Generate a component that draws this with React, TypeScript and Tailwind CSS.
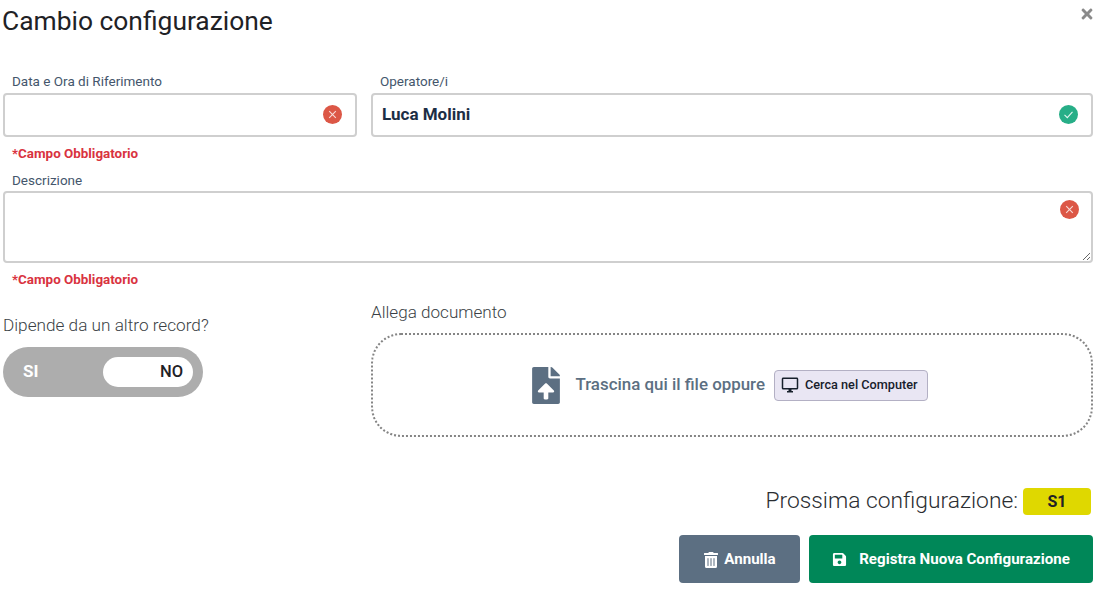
import { FaFileUpload, FaTrashAlt, FaSave, FaTimes } from "react-icons/fa";
import { MdOutlineDesktopWindows } from "react-icons/md";

function ErrIcon() {
  return (
    <svg width="19" height="19" viewBox="0 0 19 19" className="block">
      <circle cx="9.5" cy="9.5" r="9.5" fill="#dc5746" />
      <path d="M6.2 6.2l6.6 6.6M12.8 6.2l-6.6 6.6" stroke="#f8dcd8" strokeWidth="1.1" fill="none" />
    </svg>
  );
}

function OkIcon() {
  return (
    <svg width="19" height="19" viewBox="0 0 19 19" className="block">
      <circle cx="9.5" cy="9.5" r="9.5" fill="#27ae87" />
      <path d="M5.5 9.8l2.8 2.8 5.2-5.7" stroke="#e4f6f0" strokeWidth="1.1" fill="none" />
    </svg>
  );
}

function Label({ children }: { children: React.ReactNode }) {
  return <div className="h-[15px] pl-[9px] pt-[1px] text-[13.5px] leading-[15px] text-[#44566c]">{children}</div>;
}

function ErrorText() {
  return <div className="pl-[9px] text-[13.4px] leading-[15px] font-bold text-[#d9333f]">*Campo Obbligatorio</div>;
}

export default function App() {
  return (
    <div className="flex h-[591px] w-full flex-col overflow-hidden bg-white pl-[3px] pr-[10px] font-['Roboto',sans-serif]">
      <div className="flex h-[73px] items-start justify-between">
        <h1 className="ml-[-1px] pt-[3px] text-[26.4px] leading-[36px] font-normal text-[#1f2226]">Cambio configurazione</h1>
        <FaTimes className="mt-[6px] mr-[-2px] text-[16px] text-[#8a8a8a]" />
      </div>

      <div className="flex gap-[14px]">
        <div className="flex w-[354px] flex-col">
          <Label>Data e Ora di Riferimento</Label>
          <div className="mt-[5px] flex h-[44px] items-center justify-end rounded-[4px] border-2 border-[#cfcfcf] pr-[13px]">
            <div className="mb-[2px]"><ErrIcon /></div>
          </div>
          <div className="mt-[9px]"><ErrorText /></div>
        </div>
        <div className="flex min-w-0 flex-1 flex-col">
          <Label>Operatore/i</Label>
          <div className="mt-[5px] flex h-[44px] items-center justify-between rounded-[4px] border-2 border-[#cfcfcf] pl-[9px] pr-[13px]">
            <span className="text-[17px] font-bold text-[#1c2e45]">Luca Molini</span>
            <div className="mb-[2px]"><OkIcon /></div>
          </div>
        </div>
      </div>

      <div className="mt-[11px]"><Label>Descrizione</Label></div>
      <div className="relative mt-[4px] h-[72px]">
        <textarea className="block h-full w-full rounded-[4px] border-2 border-[#cfcfcf] outline-none" />
        <div className="absolute top-[9px] right-[14px]"><ErrIcon /></div>
      </div>
      <div className="mt-[9px]"><ErrorText /></div>

      <div className="mt-[14px] flex gap-[168px]">
        <div className="w-[200px] pt-[13px]">
          <div className="whitespace-nowrap text-[17.2px] leading-[22px] font-light text-[#3a3f45]">Dipende da un altro record?</div>
          <div className="mt-[11px] flex h-[50px] w-[200px] items-center justify-between rounded-full bg-[#adadad] pl-[20px] pr-[10px]">
            <span className="text-[17px] font-bold text-white">SI</span>
            <div className="flex h-[30px] w-[90px] items-center justify-end rounded-full bg-white pr-[10px]">
              <span className="text-[16.5px] font-medium text-[#1f2226]">NO</span>
            </div>
          </div>
        </div>
        <div className="min-w-0 flex-1">
          <div className="text-[17.1px] leading-[22px] font-light text-[#3a3f45]">Allega documento</div>
          <div className="mt-[10px] flex h-[104px] items-center justify-center gap-[15px] rounded-[30px] border-2 border-dotted border-[#858585] pr-[4px]">
            <FaFileUpload className="h-[37px] w-[28px] text-[#5c6f82]" />
            <div className="flex items-center gap-[9px]">
              <span className="text-[16.9px] font-medium text-[#5c6f82]">Trascina qui il file oppure</span>
              <div className="flex h-[31px] items-center gap-[6px] rounded-[4px] border border-[#b3b0c4] bg-[#e9e6f3] pl-[6px] pr-[9px]">
                <MdOutlineDesktopWindows className="text-[18px] text-[#17202b]" />
                <span className="text-[12.7px] font-medium text-[#17202b]">Cerca nel Computer</span>
              </div>
            </div>
          </div>
        </div>
      </div>

      <div className="mt-[51px] flex h-[27px] items-center justify-end gap-[5px] pr-[2px]">
        <span className="text-[22.8px] font-light text-[#2a2d31]">Prossima configurazione:</span>
        <div className="flex h-[27px] w-[68px] items-center justify-center rounded-[4px] bg-[#dfd800] text-[16px] font-bold text-[#1f2226]">S1</div>
      </div>

      <div className="mt-[20px] flex justify-end gap-[9px]">
        <button className="flex h-[48px] w-[121px] items-center justify-center gap-[5px] rounded-[4px] bg-[#5c6f82] pt-[1px] text-[15.1px] font-bold text-white">
          <FaTrashAlt className="text-[16px]" />Annulla
        </button>
        <button className="flex h-[48px] w-[284px] items-center justify-center gap-[12px] rounded-[4px] bg-[#008758] pt-[1px] text-[15.1px] font-bold text-white">
          <FaSave className="text-[15px]" />Registra Nuova Configurazione
        </button>
      </div>
    </div>
  );
}
